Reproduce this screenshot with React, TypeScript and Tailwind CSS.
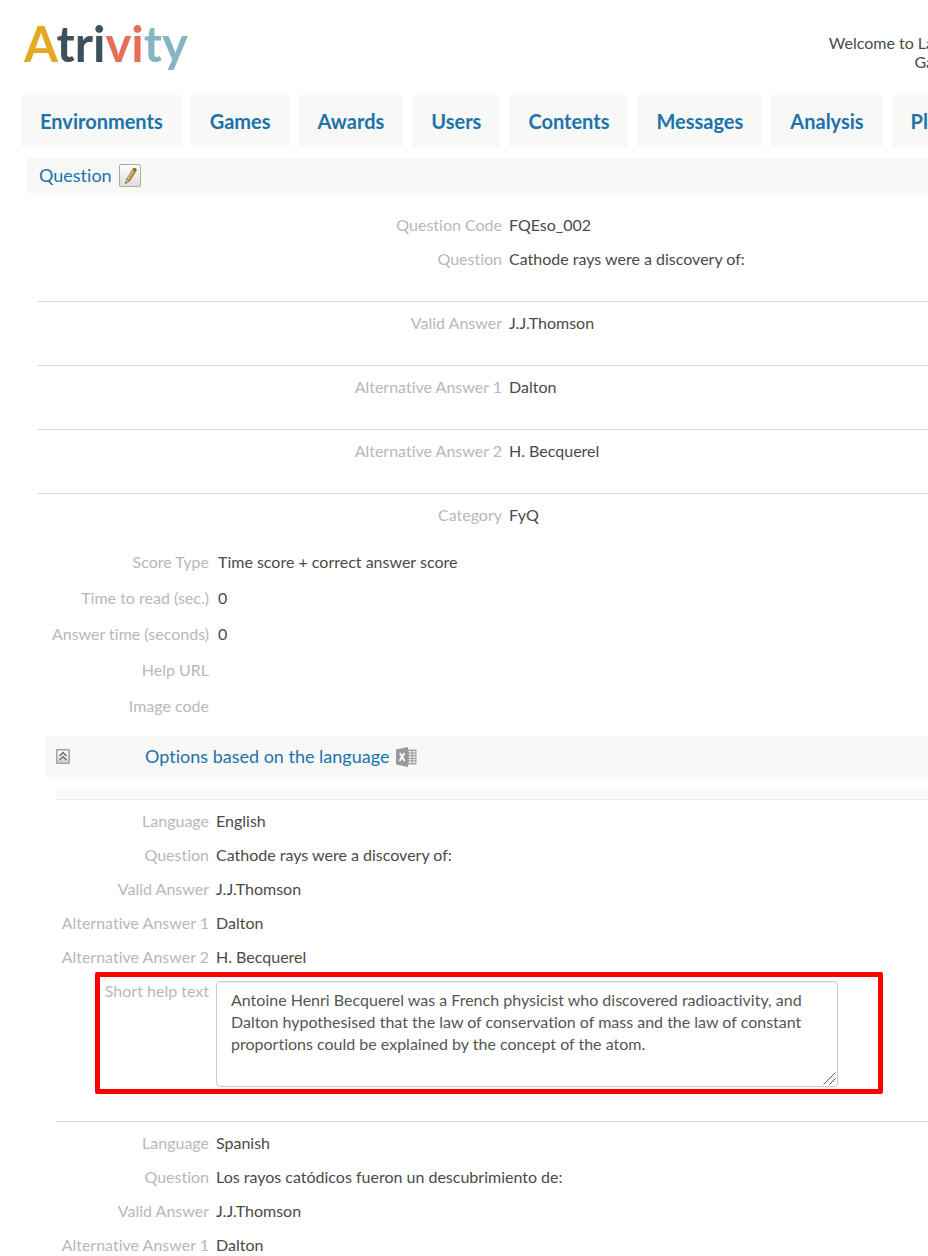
import type { ReactNode } from "react";

const tabs = ["Environments", "Games", "Awards", "Users", "Contents", "Messages", "Analysis", "Pla"];

const helpText =
  "Antoine Henri Becquerel was a French physicist who discovered radioactivity, and Dalton hypothesised that the law of conservation of mass and the law of constant proportions could be explained by the concept of the atom.";

function Logo() {
  return (
    <a href="#home" className="text-[49px] leading-[60px] font-bold">
      <span className="text-[#e5a823]">A</span>
      <span className="text-[#3f4f5b]">tri</span>
      <span className="text-[#e56f57]">vi</span>
      <span className="text-[#84b6c1]">ty</span>
    </a>
  );
}

function PencilIcon() {
  return (
    <svg width="22" height="23" viewBox="0 0 22 23" aria-hidden="true">
      <defs>
        <linearGradient id="pencil-face" x1="0" y1="0" x2="0" y2="1">
          <stop offset="0" stopColor="#fdfdfd" />
          <stop offset="1" stopColor="#deded8" />
        </linearGradient>
      </defs>
      <rect x="0.5" y="0.5" width="21" height="22" rx="1.5" fill="url(#pencil-face)" stroke="#aaa" />
      <path d="M6.4 19.8 L7 15.6 L13.2 5.4 L17.2 7.4 L10.6 17.8 Z" fill="#9a7432" />
      <path d="M8.6 15.6 L14.2 6.8" stroke="#e6cf94" strokeWidth="1.3" />
      <path d="M10.2 16.4 L15.8 8" stroke="#c9a75e" strokeWidth="0.8" />
      <path d="M13.2 5.4 Q14.8 3 16.8 4.2 Q18.6 5.4 17.2 7.4 Z" fill="#9c6615" />
      <path d="M7.3 15.8 L10.2 17.5 L6.8 19.4 Z" fill="#c9c0a8" />
      <path d="M6.3 20 L6.9 17.8 L8.4 18.8 Z" fill="#5d5238" />
    </svg>
  );
}

function CollapseIcon() {
  return (
    <svg width="14" height="15" viewBox="0 0 14 15" aria-hidden="true">
      <defs>
        <linearGradient id="collapse-face" x1="0" y1="0" x2="0" y2="1">
          <stop offset="0" stopColor="#ffffff" />
          <stop offset="1" stopColor="#d5d0ca" />
        </linearGradient>
      </defs>
      <rect x="0.75" y="0.75" width="12.5" height="13.5" rx="0.5" fill="url(#collapse-face)" stroke="#a3a3a3" strokeWidth="1.5" />
      <path d="M3.5 7 L7 3.6 L10.5 7 M3.5 11.2 L7 7.8 L10.5 11.2" fill="none" stroke="#6f737e" strokeWidth="1.5" />
    </svg>
  );
}

function SheetIcon() {
  return (
    <svg width="21" height="20" viewBox="0 0 21 20" aria-hidden="true">
      <rect x="11" y="2.5" width="9.5" height="15" fill="#a3a3a3" />
      <path d="M13 4.8h2.6M16.8 4.8h2.6M13 7.4h2.6M16.8 7.4h2.6M13 10h2.6M16.8 10h2.6M13 12.6h2.6M16.8 12.6h2.6M13 15.2h2.6M16.8 15.2h2.6" stroke="#f4f4f4" strokeWidth="1.4" />
      <path d="M0 2.4 L12 0 V20 L0 17.6 Z" fill="#9a9a9a" />
      <path d="M3.8 6 L8.6 14 M8.4 6 L3.6 14" stroke="#fff" strokeWidth="1.8" />
    </svg>
  );
}

function WideField({ label, value }: { label: string; value: string }) {
  return (
    <div className="grid grid-cols-[464px_1fr] gap-x-[7px] leading-[34px]">
      <dt className="text-right text-[#b8b8b8]">{label}</dt>
      <dd className="whitespace-nowrap">{value}</dd>
    </div>
  );
}

function WideSection({ children, last = false }: { children: ReactNode; last?: boolean }) {
  return <dl className={last ? "pt-1" : "border-b border-[#d4d4d4] pt-1 pb-[25px]"}>{children}</dl>;
}

function SettingField({ label, value }: { label: string; value: string }) {
  return (
    <div className="grid grid-cols-[171px_1fr] gap-x-[9px] leading-9">
      <dt className="text-right whitespace-nowrap text-[#b8b8b8]">{label}</dt>
      <dd>{value}</dd>
    </div>
  );
}

function LanguageField({ label, value }: { label: string; value: string }) {
  return (
    <div className="grid grid-cols-[153px_1fr] gap-x-[7px] leading-[34px]">
      <dt className="text-right whitespace-nowrap text-[#b8b8b8]">{label}</dt>
      <dd>{value}</dd>
    </div>
  );
}

export default function App() {
  return (
    <div className="h-screen overflow-hidden bg-white font-[Lato,sans-serif] text-base text-[#4a4a4a] [font-variant-ligatures:none]">
      <header className="flex h-[95px] items-start justify-between pt-[13px] pl-6">
        <Logo />
        <p className="-mr-1.5 mt-5 text-right leading-[19px] whitespace-nowrap">
          Welcome to La
          <br />
          Ga
        </p>
      </header>

      <nav className="flex gap-[9px] overflow-hidden pl-[21px]">
        {tabs.map((tab) => (
          <a
            key={tab}
            href={`#${tab.toLowerCase()}`}
            className="shrink-0 bg-[#f8f8f7] px-[19px] text-xl leading-[52px] font-bold text-[#1c72ab]"
          >
            {tab}
          </a>
        ))}
      </nav>

      <main>
        <div className="mt-[11px] ml-[27px] flex h-[35px] items-center gap-[7px] bg-[#f8f8f7] pl-3">
          <h1 className="pb-0.5 text-lg text-[#1c72ab]">Question</h1>
          <button type="button" aria-label="Edit question">
            <PencilIcon />
          </button>
        </div>

        <div className="mt-[11px] ml-[38px]">
          <WideSection>
            <WideField label="Question Code" value="FQEso_002" />
            <WideField label="Question" value="Cathode rays were a discovery of:" />
          </WideSection>
          <WideSection>
            <WideField label="Valid Answer" value="J.J.Thomson" />
          </WideSection>
          <WideSection>
            <WideField label="Alternative Answer 1" value="Dalton" />
          </WideSection>
          <WideSection>
            <WideField label="Alternative Answer 2" value="H. Becquerel" />
          </WideSection>
          <WideSection last>
            <WideField label="Category" value="FyQ" />
          </WideSection>

          <dl className="mt-3">
            <SettingField label="Score Type" value="Time score + correct answer score" />
            <SettingField label="Time to read (sec.)" value="0" />
            <SettingField label="Answer time (seconds)" value="0" />
            <SettingField label="Help URL" value="" />
            <SettingField label="Image code" value="" />
          </dl>
        </div>

        <div className="mt-3 ml-[45px] flex h-[41px] items-center bg-[#f8f8f7] pl-[11px]">
          <button type="button" aria-label="Collapse options">
            <CollapseIcon />
          </button>
          <h2 className="ml-[75px] pb-0.5 text-lg text-[#1c72ab]">Options based on the language</h2>
          <button type="button" aria-label="Export to spreadsheet" className="ml-[7px]">
            <SheetIcon />
          </button>
        </div>

        <div className="mt-[11px] ml-14">
          <div className="h-3 border-b border-[#ececec] bg-[#fafafa]" />

          <section className="border-b border-[#d4d4d4] pt-1 pb-[34px]">
            <dl>
              <LanguageField label="Language" value="English" />
              <LanguageField label="Question" value="Cathode rays were a discovery of:" />
              <LanguageField label="Valid Answer" value="J.J.Thomson" />
              <LanguageField label="Alternative Answer 1" value="Dalton" />
              <LanguageField label="Alternative Answer 2" value="H. Becquerel" />
            </dl>
            <div className="relative grid grid-cols-[153px_622px] gap-x-[7px]">
              <label htmlFor="short-help" className="text-right leading-[34px] text-[#b8b8b8]">
                Short help text
              </label>
              <div className="relative mt-[7px]">
                <textarea
                  id="short-help"
                  defaultValue={helpText}
                  className="block h-[106px] w-full resize-none overflow-hidden rounded-[4px] border border-[#ccc] px-[14px] py-[7px] leading-[22px] text-[#555] shadow-[inset_0_1px_1px_rgba(0,0,0,0.075)]"
                />
                <svg
                  width="13"
                  height="13"
                  viewBox="0 0 13 13"
                  aria-hidden="true"
                  className="pointer-events-none absolute right-0.5 bottom-0.5"
                >
                  <path d="M0.5 12.5 L12.5 0.5 M6.5 12.5 L12.5 6.5" stroke="#555" strokeWidth="1" />
                </svg>
              </div>
              <div className="pointer-events-none absolute -top-0.5 -bottom-[7px] left-[39px] w-[788px] rounded-[2px] border-[5px] border-[#ff0000]" />
            </div>
          </section>

          <dl className="pt-1">
            <LanguageField label="Language" value="Spanish" />
            <LanguageField label="Question" value="Los rayos catódicos fueron un descubrimiento de:" />
            <LanguageField label="Valid Answer" value="J.J.Thomson" />
            <LanguageField label="Alternative Answer 1" value="Dalton" />
          </dl>
        </div>
      </main>
    </div>
  );
}
